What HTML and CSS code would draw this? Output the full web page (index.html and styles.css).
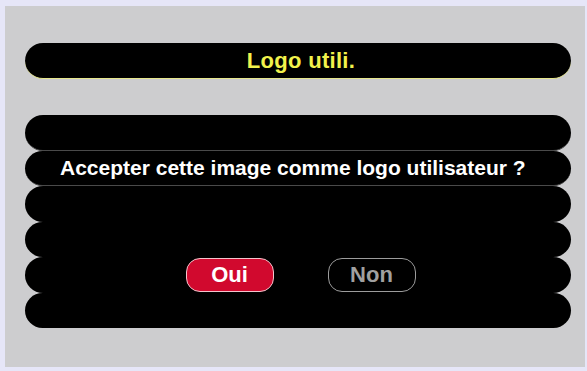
FILE: index.html
```html
<!DOCTYPE html>
<html lang="fr">
<head>
<meta charset="utf-8">
<link rel="stylesheet" href="styles.css">
</head>
<body>
<div class="frame">
  <div class="title-bar"><span class="title">Logo utili.</span></div>
  <div class="rows">
    <div class="row row-line"></div>
    <div class="row row-line row-text"><span class="message">Accepter cette image comme logo utilisateur ?</span></div>
    <div class="row"></div>
    <div class="row"></div>
    <div class="row row-buttons">
      <button class="btn btn-yes">Oui</button>
      <button class="btn btn-no">Non</button>
    </div>
    <div class="row"></div>
  </div>
</div>
</body>
</html>
```

FILE: styles.css
```css
html, body {
  margin: 0;
  padding: 0;
  background: #e6e6f8;
  width: 587px;
  height: 371px;
  overflow: hidden;
  font-family: "Liberation Sans", Arial, sans-serif;
}
.frame {
  margin: 6px 2px 0 5px;
  width: 580px;
  height: 361px;
  background: #cdcdcf;
  padding: 37px 0 0 20px;
  box-sizing: border-box;
}
.title-bar {
  width: 546px;
  height: 36px;
  box-sizing: border-box;
  background: #000;
  border-radius: 18px;
  border-bottom: 1px solid #e6e68c;
  display: flex;
  align-items: center;
  justify-content: center;
}
.title {
  color: #f2f24c;
  font-size: 22px;
  font-weight: bold;
  letter-spacing: 0.3px;
  padding-left: 6px;
  padding-top: 1px;
}
.rows {
  margin-top: 36px;
  width: 546px;
  display: flex;
  flex-direction: column;
}
.row {
  height: 35.5px;
  background: #000;
  border-radius: 18px;
  box-sizing: border-box;
  display: flex;
  align-items: center;
}
.row-line {
  border-bottom: 1px solid #4a4a4a;
}
.row-text {
  padding-left: 35px;
}
.message {
  color: #fff;
  font-size: 21px;
  font-weight: bold;
  padding-top: 1px;
}
.row-buttons {
  justify-content: center;
  gap: 54px;
  padding-left: 5px;
}
.btn {
  width: 88px;
  height: 34px;
  box-sizing: border-box;
  font-family: "Liberation Sans", Arial, sans-serif;
  font-size: 22px;
  font-weight: bold;
  border-radius: 14px;
  padding: 0;
  display: flex;
  align-items: center;
  justify-content: center;
}
.btn-yes {
  background: #d1092e;
  border: 1px solid #f2c4cc;
  color: #fff;
}
.btn-no {
  background: #000;
  border: 1px solid #9c9c9c;
  color: #a0a0a0;
}
```
